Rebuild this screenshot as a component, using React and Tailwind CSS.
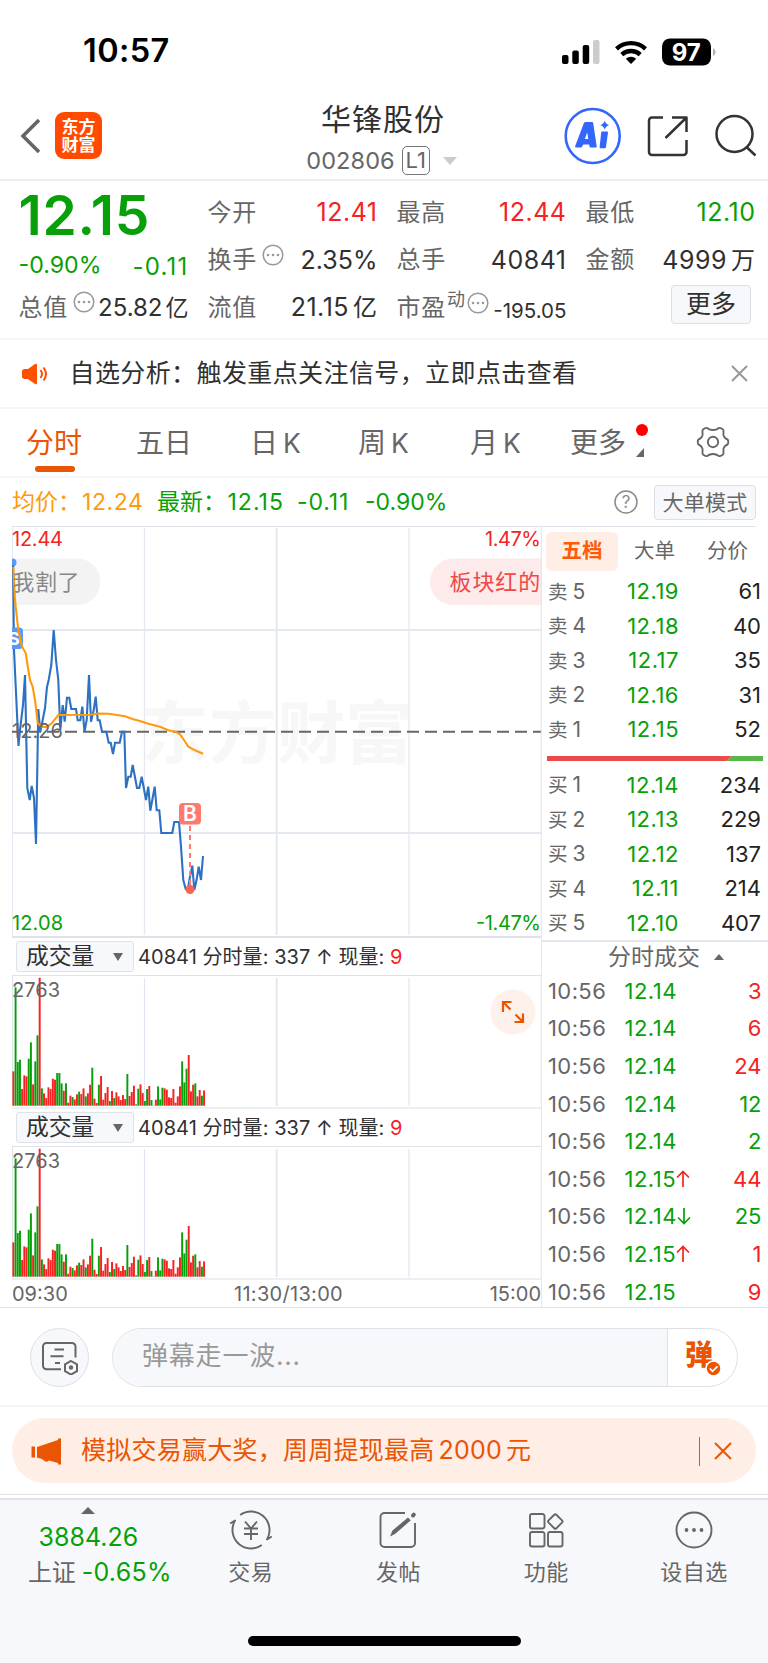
import React from 'react'

const FONT = "font-[Inter,'Noto_Sans_CJK_SC',sans-serif]"
const RED = '#f52222'
const GREEN = '#08a008'

const ASKS = [['5', '12.19', 61], ['4', '12.18', 40], ['3', '12.17', 35], ['2', '12.16', 31], ['1', '12.15', 52]]
const BIDS = [['1', '12.14', 234], ['2', '12.13', 229], ['3', '12.12', 137], ['4', '12.11', 214], ['5', '12.10', 407]]

const TRADES = [
  { price: '12.14', vol: 3, up: true },
  { price: '12.14', vol: 6, up: true },
  { price: '12.14', vol: 24, up: true },
  { price: '12.14', vol: 12, up: false },
  { price: '12.14', vol: 2, up: false },
  { price: '12.15', vol: 44, up: true, arrow: 'up' },
  { price: '12.14', vol: 25, up: false, arrow: 'down' },
  { price: '12.15', vol: 1, up: true, arrow: 'up' },
  { price: '12.15', vol: 9, up: true },
]

// one entry per minute, r = up bar, g = down bar
const VOLUMES = (
  'r103 g355 g131 g138 r50 r91 r88 g141 g190 r64 g133 g211 r384 g52 r37 r23 r55 r50 r81 r78 g98 g98 g67 r45 g67 ' +
  'r9 r30 g26 r19 r34 g42 r35 r52 g28 r37 r63 g114 r21 r8 g63 r89 r18 r38 r56 g14 r44 g23 r40 r28 r17 r32 r20 g95 ' +
  'r29 r41 r60 g4 g51 r64 r38 g14 g50 r59 g17 r1 r18 g58 g19 g54 r52 r48 r25 r23 r50 r9 r28 r58 g133 g70 g111 r152 ' +
  'r43 r63 g67 r28 r47 g30 r46'
).split(' ')

const PRICE_LINE =
  '13,565 14,650 15.5,682 18.5,746 20,730 23,705 25,675 27.3,788 29.7,800 31.7,786 34,798 36,844 38.3,709 40.3,732 42.7,720 45,708 47,687 48.7,680 51.3,665 53.7,630 56,660 58.3,680 60.3,730 62.7,705 64.7,721.7 67,697.7 69.3,697.7 71.3,709 76,709 77.7,720.3 80.3,720.3 82.3,706.7 84.5,731.7 86.7,720 89,675 91,721.7 93.7,710 95.7,696.7 97.7,720.3 99.7,720.3 102,731.7 106.3,731.7 108.7,742.7 110.7,742.7 113,754 115,742.7 119.7,742.7 122,731.7 124.3,731.7 126,788 128.3,776.7 130.7,776.7 132.7,765 137,788 139.3,788 141.7,776.7 146,800 148.3,786.7 150.3,810.7 154.7,786.7 156.7,810.3 159.3,810.3 161.3,833 172.3,833 174.3,822 179,822 181,846.7 183.3,880 185.7,889 188,888.3 190,876.7 192.3,865.7 194.3,890 196.7,879.3 198.7,866.7 201,880 203,856'

const AVG_LINE =
  '13.3,567 15,600 18.3,630 22,646.7 25.7,653 28,668 30,680 32.7,686.7 35,700 37.7,723 41.7,727 46.7,727 51.7,723.3 58.3,715 90,714.7 98,713.5 108.3,713.7 117,715 125,716.3 133.3,719.3 140,721 148.3,723.8 160,726.8 168.3,730.3 176,731.9 180,734.3 184,740 188.3,746.7 195,750.3 203,753.7'

function StatusBar() {
  return (
    <div className="flex h-[91px] items-center justify-between pl-[83px] pr-[51px] pt-[12px]">
      <span className="text-[32.5px] leading-none font-semibold text-black tracking-[0.4px]">10:57</span>
      <svg width="156" height="30" viewBox="561 36 156 30">
        <rect x="562" y="54" width="6.5" height="9" rx="2" />
        <rect x="572.3" y="49.5" width="6.5" height="13.5" rx="2" />
        <rect x="582.7" y="44" width="6.5" height="19" rx="2" />
        <rect x="593" y="39" width="6.5" height="24" rx="2" fill="#cccccc" />
        <g fill="none" stroke="#000" strokeWidth="4.4">
          <path d="M616.5 47.8a21.5 21.5 0 0 1 29 0" />
          <path d="M621.8 53.6a13.6 13.6 0 0 1 18.4 0" />
        </g>
        <path d="M631 63l-5.2-5.2a7.6 7.6 0 0 1 10.4 0z" />
        <rect x="662" y="37.5" width="49" height="27" rx="8" />
        <path d="M713 47.3c3.4 1 3.4 6.600 0 7.600z" fill="#b3b3b3" />
        <text x="686.3" y="60" textAnchor="middle" fill="#fff" fontSize="24" fontWeight="700" textLength="29">97</text>
      </svg>
    </div>
  )
}

function Header() {
  return (
    <header className="flex h-[90px] items-center border-b-2 border-[#efefef] pt-[2px]">
      <div className="flex w-[260px] items-center pl-5">
        <svg width="22" height="36" viewBox="0 0 22 36" fill="none" stroke="#666" strokeWidth="3.600">
          <path d="M19 2L3 18L19 34" />
        </svg>
        <div className="-mt-px ml-[13px] flex size-[47px] flex-col items-center justify-center rounded-[9px] bg-[#ff4a00] text-[17px] leading-[18px] font-bold text-white">
          <span>东方</span>
          <span>财富</span>
        </div>
      </div>
      <div className="flex w-[246px] flex-col items-center pt-[8px]">
        <h1 className="text-[30px] leading-[38px] tracking-[1px] text-[#303030]">华锋股份</h1>
        <div className="mt-[3px] flex h-[40px] items-center text-[23.500px] text-[#666]">
          <span className="tracking-[0.1px]">002806</span>
          <span className="ml-[7px] flex h-[29px] w-[28px] items-center justify-center rounded-[5px] border border-[#777] text-[22px]">L1</span>
          <span className="ml-[13px] mt-px mr-[3px] border-x-[7px] border-t-[8px] border-x-transparent border-t-[#ccc]" />
        </div>
      </div>
      <svg className="ml-auto mr-2" width="196" height="60" viewBox="564 106 196 60" fill="none">
        <circle cx="592.7" cy="136" r="27" stroke="#3366fb" strokeWidth="2.6" />
        <g fill="#3366fb">
          <path fillRule="evenodd" d="M585.5 122h6.500q1 0 1.200 1l3.500 23.500q0 1-1 1h-5q-1 0-1.200-1l-.3-2h-6l-1 2q-.4 1-1.500 1h-4.500q-1.600 0-1-1.500l8.500-22.500q.4-1.500 1.800-1.500zm1.700 10.500l-2.400 6.500h3.500z" />
          <path d="M602 131.500h5q1.200 0 1 1l-2 14.500q-.2 1.200-1.300 1.200h-4q-1.300 0-1.100-1.300l1.600-14.300q.1-1.100.8-1.100z" />
          <path d="M604.700 120.500q1 3.600 4.500 4.500q-3.500 1-4.500 4.500q-1-3.500-4.500-4.500q3.500-.9 4.500-4.500z" />
        </g>
        <g stroke="#333" strokeWidth="2.5" strokeLinejoin="round">
          <path d="M663 117.500h-11a3 3 0 0 0-3 3v31.500a3 3 0 0 0 3 3h31.500a3 3 0 0 0 3-3v-12" />
          <path d="M672 117.500h14.500v14.500M686 118l-20.500 20" />
          <circle cx="734.500" cy="134" r="18" />
          <path d="M746.500 147l9 8.500" />
        </g>
      </svg>
    </header>
  )
}

function Dots({ className = '' }) {
  return (
    <svg className={`shrink-0 ${className}`} width="22" height="22" viewBox="0 0 22 22" fill="#999">
      <circle cx="11" cy="11" r="9.800" fill="none" stroke="#999" strokeWidth="1.500" />
      <circle cx="6" cy="11" r="1.300" />
      <circle cx="11" cy="11" r="1.300" />
      <circle cx="16" cy="11" r="1.300" />
    </svg>
  )
}

function Stat({ label, value, color = 'text-[#303030]', dots }) {
  return (
    <div className="flex h-[47.5px] items-center justify-between">
      <span className="flex items-center text-[24px] tracking-[0.7px] text-[#666]">
        {label}
        {dots && <Dots className="-mt-2.5 ml-[5px]" />}
      </span>
      <span className={`text-[25px] whitespace-nowrap ${dots ? '' : 'tracking-[0.5px]'} ${color}`}>{value}</span>
    </div>
  )
}

function Quote() {
  return (
    <section className="grid h-[159px] grid-cols-[170px_170px_170px_170px] gap-x-[19px] border-b-2 border-[#f5f5f5] pt-[8px] pl-[18.5px] leading-none">
      <div>
        <div className="flex h-[52px] items-center text-[55px] font-semibold tracking-[0.7px] text-[#08a008]">12.15</div>
        <div className="mt-[2px] flex h-[46px] items-center justify-between text-[#08a008]">
          <span className="text-[23.200px]">-0.90%</span>
          <span className="mt-px text-[24px] tracking-[1.2px]">-0.11</span>
        </div>
        <div className="flex h-[38px] items-center justify-between">
          <span className="text-[24px] tracking-[0.7px] text-[#666]">总值</span>
          <Dots className="-mt-3 ml-[5px]" />
          <span className="ml-auto whitespace-nowrap text-[24px] text-[#303030]">25.82<span className="ml-[3px] text-[23px]">亿</span></span>
        </div>
      </div>
      <div>
        <Stat label="今开" value="12.41" color="text-[#f52222]" />
        <Stat label="换手" value="2.35%" dots />
        <Stat label="流值" value={<>21.15<span className="ml-1 text-[24px]">亿</span></>} />
      </div>
      <div>
        <Stat label="最高" value="12.44" color="text-[#f52222]" />
        <Stat label="总手" value="40841" />
        <div className="flex h-[47.5px] items-center text-[#666]">
          <span className="text-[24px] tracking-[0.7px]">市盈</span>
          <span className="-mt-4 ml-px text-[18px]">动</span>
          <Dots className="-mt-2.5 ml-[2px]" />
          <span className="mt-1.5 ml-auto text-[20.500px]">
            <span className="text-[#303030]">-195.05</span>
          </span>
        </div>
      </div>
      <div>
        <Stat label="最低" value="12.10" color="text-[#08a008]" />
        <Stat label="金额" value={<>4999<span className="ml-1 text-[24px]">万</span></>} />
        <div className="mt-[1px] ml-[85.5px] flex h-[39px] w-[80px] items-center justify-center rounded-[4px] border border-[#dcdfe6] bg-[#f7f8fb] text-[25px] text-[#303030]">更多</div>
      </div>
    </section>
  )
}

function Notice() {
  return (
    <section className="flex h-[69px] items-center border-b-2 border-[#f5f5f5] pr-[20px] pl-[22px]">
      <svg width="26" height="22" viewBox="0 0 26 22" fill="#ff5000">
        <path d="M0 7.500L2 6h4l7-5q2-1 2 1v18q0 2-2 1l-7-5H2l-2-1.500z" />
        <path d="M18.500 7q3 4 0 8M21.500 4.500q5 6.500 0 13" fill="none" stroke="#ff5000" strokeWidth="2" />
      </svg>
      <p className="ml-[21.500px] text-[25px] tracking-[0.400px] text-[#303030]">自选分析：触发重点关注信号，立即点击查看</p>
      <svg className="ml-auto" width="17" height="17" viewBox="0 0 17 17" stroke="#999" strokeWidth="2">
        <path d="M1 1l15 15M16 1L1 16" />
      </svg>
    </section>
  )
}

function Tabs() {
  return (
    <nav className="relative flex h-[69px] items-center border-b-2 border-[#f5f5f5] pl-[26px] text-[28px] text-[#666]">
      <span className="relative w-[110px] text-[#ea5504]">
        分时
        <span className="absolute top-[44px] left-[9px] h-[6px] w-[40px] rounded-full bg-[#ea5504]" />
      </span>
      <span className="w-[114px]">五日</span>
      <span className="w-[108px]">日<span className="ml-[5px] text-[26.500px]">K</span></span>
      <span className="w-[112px]">周<span className="ml-[5px] text-[26.500px]">K</span></span>
      <span className="w-[100px]">月<span className="ml-[5px] text-[26.500px]">K</span></span>
      <span className="relative">
        更多
        <span className="absolute top-[2px] right-[-22px] size-[12px] rounded-full bg-[#ff0000]" />
        <svg className="absolute right-[-18px] bottom-[7px]" width="8" height="9" viewBox="0 0 8 9"><path d="M8 0v9H0z" fill="#666" /></svg>
      </span>
      <svg className="-mt-px ml-auto mr-[38px]" width="34" height="34" viewBox="-17 -17 34 34" fill="none" stroke="#666" strokeWidth="1.900" strokeLinejoin="round">
        <circle r="5.200" />
        <path d="M-8.500 -13.500Q-7 -14.500 -5.500 -13.800Q-3.500 -12 0 -12Q3.500 -12 5.500 -13.800Q7 -14.500 8.500 -13.500L10 -12.500Q10.800 -11.500 10.500 -10Q10 -7 11 -5.500Q12 -3.500 14.500 -2.500Q15.500 -1.500 15.200 0Q15.500 1.500 14.500 2.500Q12 3.500 11 5.500Q10 7 10.500 10Q10.800 11.500 10 12.500L8.500 13.500Q7 14.500 5.500 13.800Q3.500 12 0 12Q-3.500 12 -5.500 13.800Q-7 14.500 -8.500 13.500L-10 12.500Q-10.800 11.500 -10.500 10Q-10 7 -11 5.500Q-12 3.500 -14.500 2.500Q-15.500 1.500 -15.200 0Q-15.500 -1.500 -14.500 -2.500Q-12 -3.500 -11 -5.500Q-10 -7 -10.500 -10Q-10.800 -11.500 -10 -12.500Z" />
      </svg>
    </nav>
  )
}

function InfoRow() {
  return (
    <div className="mx-3 flex h-[49px] items-center border-b border-[#dfe2e9] text-[23px] leading-none whitespace-nowrap text-[#08a008]">
      <span className="w-[145px] text-[#ff9b0a]">均价：<span className="ml-px tracking-[0.6px]">12.24</span></span>
      <span className="w-[140px]">最新：<span className="ml-[1.500px] tracking-[1px]">12.15</span></span>
      <span className="w-[68px] tracking-[0.9px]">-0.11</span>
      <span>-0.90%</span>
      <svg className="ml-auto" width="24" height="24" viewBox="0 0 24 24">
        <circle cx="12" cy="12" r="11" fill="none" stroke="#8a8a8a" strokeWidth="1.500" />
        <text x="12" y="18" textAnchor="middle" fontSize="17" fill="#8a8a8a">?</text>
      </svg>
      <span className="ml-4 flex h-[35px] w-[102px] items-center justify-center rounded-[4px] border border-[#dcdfe6] bg-[#f7f8fb] text-[21px] tracking-[0.2px] text-[#666]">大单模式</span>
    </div>
  )
}

function PriceChart() {
  return (
    <svg className="block" width="530" height="411" viewBox="12 527 530 411">
      <text x="141" y="758" fontSize="68" fontWeight="700" fill="#f7f7f7" textLength="272">东方财富</text>
      <g stroke="#e4e8f0">
        <path d="M12.500 527V937" />
        <path d="M144.500 528V935M409 528V935" strokeWidth="1.300" />
        <path d="M276.700 528V935M12 630H541M12 833H541" strokeWidth="2" />
        <path d="M12 937H541" stroke="#dfe2e8" strokeWidth="2" />
      </g>
      <path d="M12 731.700H541" stroke="#666" strokeWidth="2" strokeDasharray="12 6" strokeDashoffset="1" />
      <path d="M12 558.500H77a23.300 23.300 0 0 1 0 46.600H12z" fill="#f3f3f3" />
      <circle cx="12.500" cy="562.500" r="4" fill="#569af8" />
      <polyline points={PRICE_LINE} fill="none" stroke="#2d72c2" strokeWidth="2.100" />
      <rect x="5" y="627.500" width="18" height="21.500" rx="4" fill="#569af8" />
      <text x="8" y="645" fontSize="18" fontWeight="700" fill="#fff">S</text>
      <polyline points={AVG_LINE} fill="none" stroke="#ff9b0a" strokeWidth="2.100" />
      <text x="12.300" y="590" fontSize="22" letterSpacing="0.6" fill="#888">我割了</text>
      <path d="M541 558.500H453.300a23.300 23.300 0 0 0 0 46.600H541z" fill="#fdeaea" />
      <text x="449.500" y="590" fontSize="22" letterSpacing="0.9" fill="#f04848">板块红的</text>
      <g fontSize="20">
        <text x="12" y="545.500" fill={RED} textLength="51">12.44</text>
        <text x="541" y="545.500" textAnchor="end" fill={RED} textLength="56">1.47%</text>
        <text x="12" y="738" fill="#666" textLength="51">12.26</text>
        <text x="12" y="929.500" fill={GREEN} textLength="51">12.08</text>
        <text x="541" y="929.500" textAnchor="end" fill={GREEN} textLength="65">-1.47%</text>
      </g>
      <path d="M190 826V886" stroke="#fd7a6c" strokeWidth="2" strokeDasharray="5 4" />
      <circle cx="190" cy="889.500" r="4.500" fill="#fd6152" />
      <rect x="179" y="803" width="22" height="21.500" rx="4" fill="#fd7a6c" />
      <text x="190" y="821" fontSize="21" fontWeight="600" fill="#fff" textAnchor="middle">B</text>
      <path d="M541.500 527V938" stroke="#e4e8f0" strokeWidth="1.500" />
    </svg>
  )
}

function VolumeChart({ expand }) {
  return (
    <>
      <div className="flex h-[37px] items-center border-r border-[#e4e8f0] pl-[4px] text-[20px] leading-none whitespace-nowrap text-[#303030]">
        <span className="flex h-[31px] w-[118px] items-center justify-between rounded-[3px] border border-[#dfe2e8] bg-[#f7f8fb] pr-[10px] pl-[9px] text-[22.800px]">
          成交量
          <span className="border-x-[5px] border-t-[8px] border-x-transparent border-t-[#666]" />
        </span>
        <span className="ml-[4px] tracking-[0.05px]">40841 分时量: 337 ↑ 现量: <span className="text-[#f52222]">9</span></span>
      </div>
      <svg className="block" width="530" height="134" viewBox="12 975 530 134">
        <path d="M12 975.500H541M12.500 975V1106" stroke="#dfe2e8" />
        <path d="M144.500 978V1106M409 978V1106" stroke="#e0e5ef" strokeWidth="1.200" />
        <path d="M276.700 978V1106" stroke="#e4e8f0" strokeWidth="2" />
        <path d="M12 1108H541" stroke="#e8eaee" strokeWidth="1.500" />
        {VOLUMES.map((v, i) => {
          const h = Number(v.slice(1)) / 3
          return <rect key={i} x={12.400 + i * 2.192} y={1105.700 - h} width="1.950" height={h} fill={v[0] === 'r' ? RED : GREEN} />
        })}
        <text x="12" y="997" fontSize="20" fill="#666" textLength="48">2763</text>
        {expand && (
          <g>
            <circle cx="513" cy="1012" r="22.500" fill="#fef0ea" />
            <path d="M503 1012V1002H511.500M503.500 1002.500L510.500 1009.500M523 1013.500V1022H514.500M522.500 1021.500L515.500 1014.500" fill="none" stroke="#ea5504" strokeWidth="2.200" />
          </g>
        )}
        <path d="M541.500 975V1109" stroke="#e4e8f0" strokeWidth="1.500" />
      </svg>
    </>
  )
}

function BookRow({ side, level, price, qty }) {
  return (
    <div className="flex h-[34.500px] items-center pr-[7px] pl-[6px] text-[22px]">
      <span className="w-[76px] text-[21px] text-[#666]"><span className="mr-[5px] text-[19.500px]">{side}</span>{level}</span>
      <span className="w-[55px] text-right tracking-[0.5px] text-[#08a008]">{price}</span>
      <span className="ml-auto text-[#222]">{qty}</span>
    </div>
  )
}

function Arrow({ dir }) {
  return (
    <svg width="14" height="17" viewBox="0 0 14 17" fill="none" stroke={dir === 'up' ? RED : GREEN} strokeWidth="1.700">
      <path d={dir === 'up' ? 'M7 17V1.500M1 7.500L7 1.500L13 7.500' : 'M7 0V15.500M1 9.500L7 15.500L13 9.500'} />
    </svg>
  )
}

function OrderBook() {
  return (
    <aside className="w-[226px] leading-none">
      <div className="flex h-[47px] items-center pt-px pl-[4px] text-[20.500px] text-[#666]">
        <span className="flex h-[39px] w-[72px] items-center justify-center rounded-[6px] bg-[#ffeee5] font-bold text-[#ff5a05]">五档</span>
        <span className="ml-[16px]">大单</span>
        <span className="ml-[32px]">分价</span>
      </div>
      {ASKS.map(([l, p, q]) => <BookRow key={l} side="卖" level={l} price={p} qty={q} />)}
      <svg className="mt-[9px] mb-[7px] ml-[5px] block" width="216" height="5" viewBox="0 0 216 5">
        <path d="M0 0h184.500l-5 5H0z" fill="#ec4a4a" />
        <path d="M184.500 0H216v5H179.500z" fill="#57b847" />
      </svg>
      {BIDS.map(([l, p, q]) => <BookRow key={l} side="买" level={l} price={p} qty={q} />)}
      <div className="flex h-[32px] items-center justify-center border-t-2 border-[#e4e7ee] pl-[22px] text-[23px] text-[#666]">
        分时成交
        <span className="ml-[14px] border-x-[5px] border-b-[6px] border-x-transparent border-b-[#666]" />
      </div>
      {TRADES.map((t, i) => (
        <div key={i} className="flex h-[37.600px] items-center pr-[6.500px] pl-[6px] text-[22px] text-[#08a008]">
          <span className="w-[76.500px] tracking-[0.4px] text-[#666]">10:56</span>
          <span className="tracking-[0.5px]">{t.price}</span>
          {t.arrow && <Arrow dir={t.arrow} />}
          <span className={`ml-auto ${t.up ? 'text-[#f52222]' : 'text-[#08a008]'}`}>{t.vol}</span>
        </div>
      ))}
    </aside>
  )
}

function Danmu() {
  return (
    <section className="flex h-[99px] items-center border-b-2 border-[#f6f6f6] pt-[2px] pl-[30px]">
      <span className="flex size-[59px] items-center justify-center rounded-full border border-[#dfe0e6] bg-[#f7f8fb]">
        <svg width="38" height="34" viewBox="41 1341 38 34" fill="none" stroke="#666" strokeWidth="2">
          <path d="M61 1369.300H46.500a3.500 3.500 0 0 1-3.500-3.500V1346.500a3.500 3.500 0 0 1 3.500-3.500h25.500a3.500 3.500 0 0 1 3.500 3.500v11" />
          <path d="M54.500 1349.500h9.500M50.500 1356.300h13M55 1363h5" />
          <path d="M71 1361l6 3.400v6.800l-6 3.400l-6-3.400v-6.800z" />
          <circle cx="71" cy="1367.500" r="1.200" />
        </svg>
      </span>
      <div className="ml-[23px] flex h-[59px] w-[626px] overflow-hidden rounded-full border-[1.500px] border-[#dfe0e6]">
        <div className="flex w-[555px] items-center border-r border-[#dfe0e6] bg-[#f7f8fb] pb-[5px] pl-[29px] text-[26px] tracking-[0.8px] text-[#999]">弹幕走一波...</div>
        <div className="relative flex-1 text-[#ea5504]">
          <span className="absolute top-[12px] left-[17px] text-[28px] leading-none font-black">弹</span>
          <svg className="absolute top-[31px] left-[37px]" width="17" height="17" viewBox="0 0 17 17">
            <circle cx="8.500" cy="8.500" r="7.500" fill="#ea5504" stroke="#fff" strokeWidth="1.500" />
            <path d="M4.800 8.500l2.700 2.800l5-5" fill="none" stroke="#fff" strokeWidth="1.700" />
          </svg>
        </div>
      </div>
    </section>
  )
}

function Promo() {
  return (
    <section className="h-[88px] border-b border-[#e1e3e8] px-3 pt-[11px]">
      <div className="flex h-[65px] items-center rounded-full bg-[#feeee6] pt-px pr-[24px] pl-[19px] text-[#ea5504]">
        <svg width="31" height="27" viewBox="31 1437 31 27" fill="#ea5504">
          <path d="M31.500 1445.500h3.500v11h-3.500zM37 1446l21-7v-1.500h3v26h-3v-1.500l-9-2.500q-2.500 2.500-5 0l-2-1.500l-5-1.500z" />
        </svg>
        <p className="ml-[19px] text-[25px] tracking-[0.250px] whitespace-nowrap">模拟交易赢大奖，周周提现最高<span className="mx-1">2000</span>元</p>
        <span className="ml-auto h-[29px] w-px bg-[#ea5504]" />
        <svg className="ml-[14px]" width="18" height="18" viewBox="0 0 18 18" stroke="#ea5504" strokeWidth="2">
          <path d="M1 1l16 16M17 1L1 17" />
        </svg>
      </div>
    </section>
  )
}

function NavItem({ label, children }) {
  return (
    <div className="flex w-[148px] flex-col items-center">
      <svg width="44" height="40" viewBox="-22 -20 44 40" fill="none" stroke="#666" strokeWidth="1.900" strokeLinejoin="round">{children}</svg>
      <span className="mt-[6px] text-[22px] leading-[32px] tracking-[0.5px]">{label}</span>
    </div>
  )
}

function BottomNav() {
  return (
    <footer className="mt-[3px] flex h-[166px] flex-col border-t-2 border-[#e3e4e8] bg-[#f7f8fb] text-[#666]">
      <div className="flex h-[136px] pt-[10px]">
        <div className="flex w-[177px] flex-col items-center leading-none">
          <span className="-mt-[3px] border-x-[7px] border-b-[7px] border-x-transparent border-b-[#666]" />
          <span className="mt-[7px] text-[25px] leading-[32px] text-[#08a008]">3884.26</span>
          <span className="mt-[2px] ml-[23px] text-[24px] leading-[34px] whitespace-nowrap">上证 <span className="-ml-px text-[25px] tracking-[0.3px] text-[#08a008]">-0.65%</span></span>
        </div>
        <NavItem label="交易">
          <path d="M-10.800 -15A18.500 18.500 0 0 1 16.800 7.800L16 9.500L20.800 6.500M10.800 15A18.500 18.500 0 0 1 -16.800 -7.800L-16 -9.500L-20.800 -6.500" />
          <path d="M-6 -8.500L0 -1.500L6 -8.500M0 -1.500V10M-7 -1.500H7M-7 4H7" />
        </NavItem>
        <NavItem label="发帖">
          <path d="M7 -17H-13.500a4 4 0 0 0-4 4V13a4 4 0 0 0 4 4H13a4 4 0 0 0 4-4V-7" />
          <path d="M-8 6.500l2.500-6L10 -12.500l2.800 2.800L-3 4z" fill="#666" stroke="none" />
          <path d="M15 -14.500l.8-.8" strokeWidth="4" strokeLinecap="round" />
        </NavItem>
        <NavItem label="功能">
          <rect x="-16" y="-16" width="14.500" height="14.500" rx="2" />
          <rect x="-16" y="2" width="14.500" height="14.500" rx="2" />
          <rect x="2" y="2" width="14.500" height="14.500" rx="2" />
          <rect x="-5.500" y="-5.500" width="11" height="11" rx="1.500" transform="translate(9.300 -8.500) rotate(45)" />
        </NavItem>
        <NavItem label="设自选">
          <circle r="17.500" />
          <g fill="#666" stroke="none">
            <circle cx="-7.500" cy="0" r="1.900" />
            <circle cx="0" cy="0" r="1.900" />
            <circle cx="7.500" cy="0" r="1.900" />
          </g>
        </NavItem>
      </div>
      <div className="mx-auto h-[10px] w-[273px] rounded-full bg-black" />
    </footer>
  )
}

export default function App() {
  return (
    <div className={`h-[1663px] w-[768px] overflow-hidden bg-white text-[#303030] ${FONT}`}>
      <StatusBar />
      <Header />
      <Quote />
      <Notice />
      <Tabs />
      <InfoRow />
      <div className="flex h-[781px] border-b border-[#e1e3e8]">
        <div className="ml-3 w-[530px]">
          <PriceChart />
          <VolumeChart expand />
          <VolumeChart />
          <div className="flex h-[28px] items-center border-r border-[#e4e8f0] text-[20px] text-[#666]">
            <span className="w-[222px]">09:30</span>
            <span className="tracking-[0.3px]">11:30/13:00</span>
            <span className="ml-auto">15:00</span>
          </div>
        </div>
        <OrderBook />
      </div>
      <Danmu />
      <Promo />
      <BottomNav />
    </div>
  )
}
